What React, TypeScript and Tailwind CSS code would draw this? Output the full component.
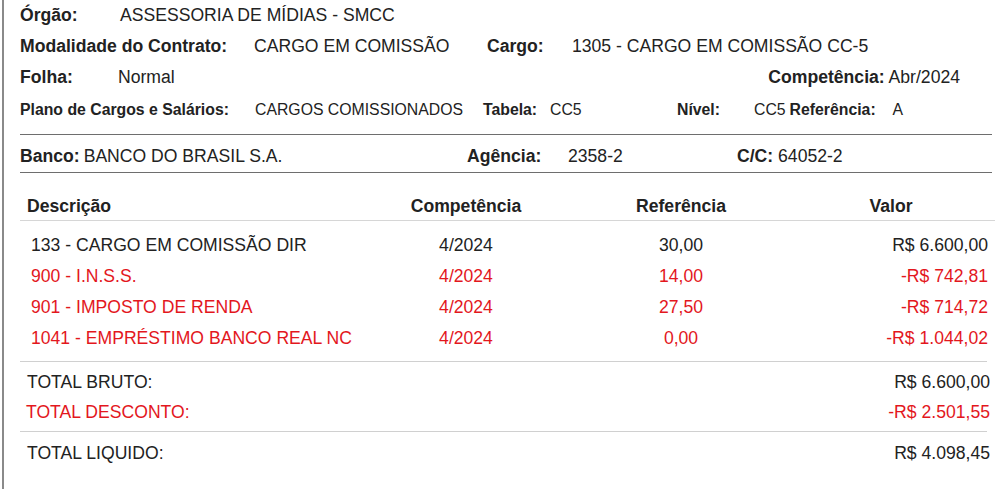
const RED = 'text-[#e3171d]'

type Item = { desc: string; comp: string; ref: string; valor: string; red?: boolean }

const items: Item[] = [
  { desc: '133 - CARGO EM COMISSÃO DIR', comp: '4/2024', ref: '30,00', valor: 'R$ 6.600,00' },
  { desc: '900 - I.N.S.S.', comp: '4/2024', ref: '14,00', valor: '-R$ 742,81', red: true },
  { desc: '901 - IMPOSTO DE RENDA', comp: '4/2024', ref: '27,50', valor: '-R$ 714,72', red: true },
  { desc: '1041 - EMPRÉSTIMO BANCO REAL NC', comp: '4/2024', ref: '0,00', valor: '-R$ 1.044,02', red: true },
]

export default function App() {
  return (
    <div className="h-[489px] bg-white text-[#222] font-['Liberation_Sans',Arial,sans-serif] text-[17.6px] leading-none">
      <div className="ml-[2px] h-full border-l-2 border-[#8a8a8a] pl-4 pr-[11px]">

        {/* Dados do servidor */}
        <div className="flex h-[31px] items-center">
          <span className="w-[100px] font-bold">Órgão:</span>
          <span>ASSESSORIA DE MÍDIAS - SMCC</span>
        </div>
        <div className="flex h-[31px] items-center">
          <span className="w-[234px] font-bold">Modalidade do Contrato:</span>
          <span className="w-[233px]">CARGO EM COMISSÃO</span>
          <span className="w-[85px] font-bold">Cargo:</span>
          <span>1305 - CARGO EM COMISSÃO CC-5</span>
        </div>
        <div className="flex h-[31px] items-center">
          <span className="w-[98px] font-bold">Folha:</span>
          <span>Normal</span>
          <span className="ml-auto mr-[32px]">
            <span className="font-bold">Competência:</span> Abr/2024
          </span>
        </div>
        <div className="flex h-[34px] items-center text-[15.8px]">
          <span className="w-[235px] font-bold">Plano de Cargos e Salários:</span>
          <span className="w-[228px]">CARGOS COMISSIONADOS</span>
          <span className="w-[67px] font-bold">Tabela:</span>
          <span className="w-[127px]">CC5</span>
          <span className="w-[77px] font-bold">Nível:</span>
          <span className="mr-[4px]">CC5</span>
          <span className="w-[103px] font-bold">Referência:</span>
          <span>A</span>
        </div>

        {/* Banco */}
        <div className="mt-[7px] flex h-[39px] items-center border-y border-[#6e6e6e] pt-[6px]">
          <span className="w-[447px]">
            <span className="font-bold">Banco:</span>
            <span className="ml-[4px]">BANCO DO BRASIL S.A.</span>
          </span>
          <span className="w-[101px] font-bold">Agência:</span>
          <span className="w-[169px]">2358-2</span>
          <span>
            <span className="font-bold">C/C:</span> 64052-2
          </span>
        </div>

        {/* Tabela */}
        <div className="-mr-[3px] mt-[19px] grid h-[29px] grid-cols-[340px_212px_218px_1fr] items-center border-b border-[#d6d6d6] pt-[2px] pr-[3px] font-bold">
          <span className="pl-[7px]">Descrição</span>
          <span className="text-center">Competência</span>
          <span className="text-center">Referência</span>
          <span className="text-center">Valor</span>
        </div>
        <div className="pt-[9px] pb-[7px]">
          {items.map((it) => (
            <div key={it.desc} className={`grid h-[31px] grid-cols-[340px_212px_218px_1fr] items-center ${it.red ? RED : ''}`}>
              <span className="pl-[11px]">{it.desc}</span>
              <span className="text-center">{it.comp}</span>
              <span className="text-center">{it.ref}</span>
              <span className="pr-[4px] text-right">{it.valor}</span>
            </div>
          ))}
        </div>

        {/* Totais */}
        <div className="mr-[5px] border-t border-[#d0d0d0] pt-[6px] pb-[3px]">
          <div className="-mr-[3px] flex h-[30px] items-center justify-between pl-[7px]">
            <span>TOTAL BRUTO:</span>
            <span>R$ 6.600,00</span>
          </div>
          <div className={`-mr-[3px] flex h-[30px] items-center justify-between pl-[6px] ${RED}`}>
            <span>TOTAL DESCONTO:</span>
            <span>-R$ 2.501,55</span>
          </div>
        </div>
        <div className="mr-[5px] border-t border-[#d0d0d0] pt-[7px]">
          <div className="-mr-[3px] flex h-[30px] items-center justify-between pl-[7px]">
            <span>TOTAL LIQUIDO:</span>
            <span>R$ 4.098,45</span>
          </div>
        </div>
      </div>
    </div>
  )
}
